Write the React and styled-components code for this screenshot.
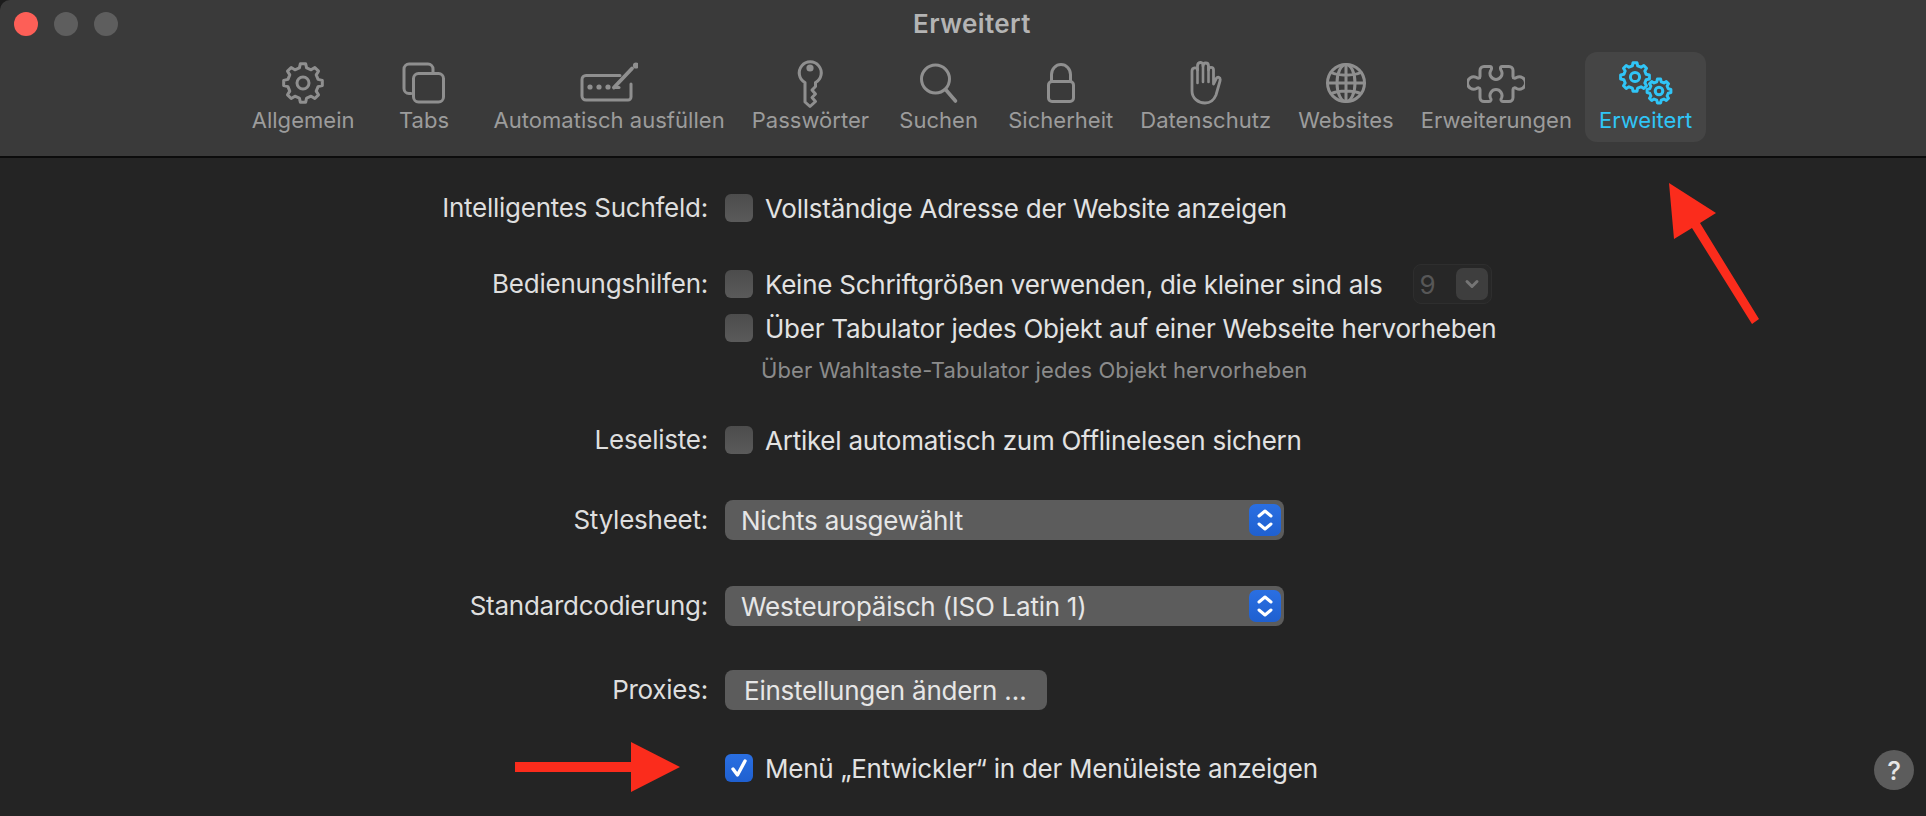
import React from 'react';
import styled, { createGlobalStyle } from 'styled-components';

const GlobalStyle = createGlobalStyle`
  html, body {
    margin: 0;
    height: 100%;
    overflow: hidden;
    background: #1c1c1c;
  }
  body {
    font-family: Inter, "Liberation Sans", sans-serif;
    -webkit-font-smoothing: antialiased;
  }
`;

/* the window is a bit wider than the screenshot, its right edge is cut off */
const Window = styled.div`
  position: relative;
  width: 1944px;
  height: 816px;
  background: #242424;
  border-top-left-radius: 10px;
  overflow: hidden;
`;

const Header = styled.header`
  height: 156px;
  background: #3a3a3a;
  border-bottom: 2px solid #0c0c0c;
`;

const TitleBar = styled.div`
  height: 52px;
  padding: 0 14px;
  display: grid;
  grid-template-columns: 1fr auto 1fr;
  align-items: start;
`;

const Lights = styled.div`
  display: flex;
  gap: 16px;
  padding-top: 12px;
`;

const Light = styled.span`
  width: 24px;
  height: 24px;
  border-radius: 50%;
  background: ${props => props.$color};
`;

const Title = styled.h1`
  margin: 9px 0 0;
  font-size: 26px;
  line-height: 30px;
  font-weight: 600;
  letter-spacing: 0.4px;
  color: #b4b4b4;
`;

const Toolbar = styled.nav`
  display: flex;
  justify-content: center;
`;

const Tool = styled.div`
  min-width: 112px;
  height: 90px;
  box-sizing: border-box;
  padding: 5px 13.5px 0;
  display: flex;
  flex-direction: column;
  align-items: center;
  border-radius: 12px;
  color: ${props => (props.$active ? '#30c5f7' : '#8f8f8f')};
  background: ${props => (props.$active ? '#454545' : 'transparent')};
`;

const ToolLabel = styled.span`
  margin-top: -1px;
  font-size: 22px;
  line-height: 24px;
  letter-spacing: 0.03px;
  white-space: nowrap;
  color: ${props => (props.$active ? '#30c5f7' : '#9c9c9c')};
`;

const Icon = styled.svg`
  display: block;
  height: 52px;
  fill: none;
  stroke: currentColor;
  stroke-width: 3;
  stroke-linecap: round;
  stroke-linejoin: round;
`;

const Form = styled.main`
  padding: 36px 30px 0 0;
`;

const Row = styled.div`
  display: grid;
  grid-template-columns: 708px 1fr;
  column-gap: 17px;
  margin-top: ${props => props.$top || 0}px;
`;

const Label = styled.div`
  text-align: right;
  font-size: 26px;
  line-height: ${props => (props.$tall ? 40 : 28)}px;
  letter-spacing: -0.25px;
  color: #dedede;
  white-space: nowrap;
`;

const Controls = styled.div`
  display: flex;
  flex-direction: column;
  align-items: flex-start;
`;

const CheckRow = styled.label`
  display: flex;
  align-items: center;
  height: 28px;
  gap: 12px;
  margin-top: ${props => props.$top || 0}px;
  font-size: 26px;
  letter-spacing: -0.25px;
  color: #e2e2e2;
  white-space: nowrap;
`;

const Box = styled.span`
  width: 28px;
  height: 28px;
  flex-shrink: 0;
  display: flex;
  align-items: center;
  justify-content: center;
  border-radius: 6px;
  background: ${props =>
    props.$checked
      ? 'linear-gradient(#2a6fe2, #1f60d0)'
      : 'linear-gradient(#4c4c4c, #5a5a5a)'};
`;

const Hint = styled.div`
  margin: 14px 0 0 36px;
  font-size: 22px;
  line-height: 28px;
  letter-spacing: 0.1px;
  color: #8b8b8b;
  white-space: nowrap;
`;

const SizeSelect = styled.span`
  width: 79px;
  height: 40px;
  margin-left: 18px;
  box-sizing: border-box;
  padding: 3px 3px 3px 6px;
  display: flex;
  justify-content: space-between;
  align-items: center;
  background: #272727;
  border: 1px solid #2e2e2e;
  border-radius: 8px;
  font-size: 26px;
  color: #575757;
`;

const SizeArrow = styled.span`
  width: 32px;
  height: 32px;
  display: flex;
  align-items: center;
  justify-content: center;
  border-radius: 7px;
  background: #3e3e3e;
  color: #757575;
`;

const Select = styled.div`
  width: 559px;
  height: 40px;
  box-sizing: border-box;
  padding: 4px 3px 4px 16px;
  display: flex;
  justify-content: space-between;
  align-items: center;
  border-radius: 8px;
  background: #5c5c5c;
  font-size: 26px;
  letter-spacing: -0.25px;
  color: #e6e6e6;
`;

const Stepper = styled.span`
  width: 32px;
  height: 32px;
  display: flex;
  align-items: center;
  justify-content: center;
  border-radius: 7px;
  background: linear-gradient(#2a6fe2, #1f60d0);
  color: #fff;
`;

const Button = styled.div`
  width: 322px;
  height: 40px;
  box-sizing: border-box;
  padding-left: 19px;
  display: flex;
  align-items: center;
  border-radius: 8px;
  background: #5c5c5c;
  font-size: 26px;
  letter-spacing: -0.25px;
  color: #e6e6e6;
`;

const LastControls = styled.div`
  display: flex;
  justify-content: space-between;
  align-items: flex-start;
`;

const Help = styled.span`
  width: 40px;
  height: 40px;
  margin-top: -4px;
  display: flex;
  align-items: center;
  justify-content: center;
  border-radius: 50%;
  background: #5c5c5c;
  font-size: 26px;
  font-weight: 500;
  color: #e6e6e6;
`;

const AnnotationArrow = styled.svg`
  position: absolute;
  left: ${props => props.$left}px;
  top: ${props => props.$top}px;
  fill: #fb2c1c;
`;

// gear outline with the top tooth pointing straight up
const gearPath = (cx, cy, R, r, teeth = 8) => {
  const step = (Math.PI * 2) / teeth;
  const point = (radius, angle) =>
    `${(cx + radius * Math.sin(angle)).toFixed(2)} ${(cy - radius * Math.cos(angle)).toFixed(2)}`;
  let d = '';
  for (let i = 0; i < teeth; i++) {
    const a = i * step;
    d += `${i ? 'L' : 'M'}${point(r, a - step * 0.3)} L${point(R, a - step * 0.17)} L${point(R, a + step * 0.17)} L${point(r, a + step * 0.3)} `;
  }
  return d + 'Z';
};

const GearIcon = () => (
  <Icon width="48" viewBox="0 0 48 52">
    <path d={gearPath(24, 26, 19.5, 15.5)} />
    <circle cx="24" cy="26" r="6" />
  </Icon>
);

const TabsIcon = () => (
  <Icon width="44" viewBox="0 0 44 52">
    <path d="M9 36.5H7a5 5 0 0 1-5-5V12a5 5 0 0 1 5-5h19a5 5 0 0 1 5 5v4" />
    <rect x="11.5" y="16.5" width="30" height="28.5" rx="5" />
  </Icon>
);

const AutofillIcon = () => (
  <Icon width="58" viewBox="0 0 58 52">
    <path d="M40 18.5H6a4 4 0 0 0-4 4V39a4 4 0 0 0 4 4h42a3 3 0 0 0 3-3V27" />
    <path d="M34 30.5L52 11.5" strokeWidth="3.8" />
    <path d="M34 30.5h5" />
    <circle cx="56" cy="8.5" r="1.6" fill="currentColor" />
    <g fill="currentColor" stroke="none">
      <circle cx="10" cy="30" r="2.6" />
      <circle cx="19" cy="30" r="2.6" />
      <circle cx="28" cy="30" r="2.6" />
    </g>
  </Icon>
);

const KeyIcon = () => (
  <Icon width="28" viewBox="0 0 28 52">
    <path d="M9 25.5A11 11 0 1 1 19.5 25.5V29.5L16 33L19.5 37L16 40.5L19.5 44.5L14 49.5L9 45Z" />
    <circle cx="14" cy="11" r="3.6" fill="currentColor" stroke="none" />
  </Icon>
);

const SearchIcon = () => (
  <Icon width="40" viewBox="0 0 40 52">
    <circle cx="16.5" cy="22" r="14" />
    <path d="M27 33L36.5 44" strokeWidth="3.6" />
  </Icon>
);

const LockIcon = () => (
  <Icon width="28" viewBox="0 0 28 52">
    <rect x="1.5" y="24.5" width="25" height="20" rx="3.5" />
    <path d="M4.5 24V17.5a9.5 10 0 0 1 19 0V24" />
  </Icon>
);

const HandIcon = () => (
  <Icon width="32" viewBox="0 0 32 52">
    <path d="M2 17V34C2 41 8 46 15 46C21 46 24 43 26 38L30 24C31 20 27 19 26 22L23.5 27V13C23.5 9.5 18.5 9.5 18.5 13V9C18.5 5 13 5 13 9V8C13 4.5 7.5 4.5 7.5 9V13C7.5 10 2 10 2 14V17Z" strokeWidth="2.8" />
    <path d="M7.5 12V26M13 8V25M18.5 10V25" strokeWidth="2.6" />
  </Icon>
);

const GlobeIcon = () => (
  <Icon width="42" viewBox="0 0 42 52" strokeWidth="2.6">
    <circle cx="21" cy="26" r="18.5" />
    <ellipse cx="21" cy="26" rx="9" ry="18.5" />
    <path d="M21 7.5V44.5M2.5 26H39.5M6 15.5C14 19 28 19 36 15.5M6 36.5C14 33 28 33 36 36.5" />
  </Icon>
);

const PuzzleIcon = () => (
  <Icon width="58" viewBox="0 0 58 52">
    <path d="M17 9.5H23C25 9.5 25 12 23.5 14A6 6 0 1 0 34.5 14C33 12 33 9.5 35 9.5H42A4 4 0 0 1 46 13.5V19.5C46 21.5 48 21.5 49.5 20.5A6.2 6.2 0 1 1 49.5 31.5C48 30.5 46 30.5 46 32.5V40.5A4 4 0 0 1 42 44.5H36C34 44.5 33.5 42.5 34.5 41A6 6 0 1 0 23.5 41C24.5 42.5 24 44.5 22 44.5H17A4 4 0 0 1 13 40.5V32.5C13 30.5 11 30.5 9.5 31.5A6.2 6.2 0 1 1 9.5 20.5C11 21.5 13 21.5 13 19.5V13.5A4 4 0 0 1 17 9.5Z" />
  </Icon>
);

const GearsIcon = () => (
  <Icon width="54" viewBox="0 0 54 52" strokeWidth="2.6">
    <path d={gearPath(16, 20, 14.5, 11.5)} />
    <circle cx="16" cy="20" r="4.6" />
    <path d={gearPath(40, 34, 12, 9.5)} />
    <circle cx="40" cy="34" r="3.8" />
  </Icon>
);

const Chevrons = () => (
  <svg width="20" height="24" viewBox="0 0 20 24" fill="none" stroke="currentColor" strokeWidth="3" strokeLinecap="round" strokeLinejoin="round">
    <path d="M4 8L10 3L16 8M4 16L10 21L16 16" />
  </svg>
);

const tools = [
  { label: 'Allgemein', icon: GearIcon },
  { label: 'Tabs', icon: TabsIcon },
  { label: 'Automatisch ausfüllen', icon: AutofillIcon },
  { label: 'Passwörter', icon: KeyIcon },
  { label: 'Suchen', icon: SearchIcon },
  { label: 'Sicherheit', icon: LockIcon },
  { label: 'Datenschutz', icon: HandIcon },
  { label: 'Websites', icon: GlobeIcon },
  { label: 'Erweiterungen', icon: PuzzleIcon },
  { label: 'Erweitert', icon: GearsIcon, active: true },
];

const Check = ({ checked, top, children }) => (
  <CheckRow $top={top}>
    <Box $checked={checked}>
      {checked && (
        <svg width="18" height="20" viewBox="0 0 18 20" fill="none" stroke="#fff" strokeWidth="3.4" strokeLinecap="round" strokeLinejoin="round">
          <path d="M3 11L7.5 17L15 3" />
        </svg>
      )}
    </Box>
    <span>{children}</span>
  </CheckRow>
);

const App = () => (
  <Window>
    <GlobalStyle />
    <Header>
      <TitleBar>
        <Lights>
          <Light $color="#fd5f57" />
          <Light $color="#5e5e5e" />
          <Light $color="#5e5e5e" />
        </Lights>
        <Title>Erweitert</Title>
      </TitleBar>
      <Toolbar>
        {tools.map(({ label, icon: ToolIcon, active }) => (
          <Tool key={label} $active={active}>
            <ToolIcon />
            <ToolLabel $active={active}>{label}</ToolLabel>
          </Tool>
        ))}
      </Toolbar>
    </Header>

    <Form>
      <Row>
        <Label>Intelligentes Suchfeld:</Label>
        <Controls>
          <Check>Vollständige Adresse der Website anzeigen</Check>
        </Controls>
      </Row>

      <Row $top={48}>
        <Label>Bedienungshilfen:</Label>
        <Controls>
          <CheckRow>
            <Box />
            <span>Keine Schriftgrößen verwenden, die kleiner sind als</span>
            <SizeSelect>
              9
              <SizeArrow>
                <svg width="16" height="10" viewBox="0 0 16 10" fill="none" stroke="currentColor" strokeWidth="3" strokeLinecap="round" strokeLinejoin="round">
                  <path d="M3 2.5L8 7.5L13 2.5" />
                </svg>
              </SizeArrow>
            </SizeSelect>
          </CheckRow>
          <Check top={16}>Über Tabulator jedes Objekt auf einer Webseite hervorheben</Check>
          <Hint>Über Wahltaste-Tabulator jedes Objekt hervorheben</Hint>
        </Controls>
      </Row>

      <Row $top={42}>
        <Label>Leseliste:</Label>
        <Controls>
          <Check>Artikel automatisch zum Offlinelesen sichern</Check>
        </Controls>
      </Row>

      <Row $top={46}>
        <Label $tall>Stylesheet:</Label>
        <Select>
          Nichts ausgewählt
          <Stepper><Chevrons /></Stepper>
        </Select>
      </Row>

      <Row $top={46}>
        <Label $tall>Standardcodierung:</Label>
        <Select>
          Westeuropäisch (ISO Latin 1)
          <Stepper><Chevrons /></Stepper>
        </Select>
      </Row>

      <Row $top={44}>
        <Label $tall>Proxies:</Label>
        <Button>Einstellungen ändern …</Button>
      </Row>

      <Row $top={44}>
        <span />
        <LastControls>
          <Check checked>Menü „Entwickler“ in der Menüleiste anzeigen</Check>
          <Help>?</Help>
        </LastControls>
      </Row>
    </Form>

    <AnnotationArrow $left={1665} $top={180} width="100" height="148" viewBox="0 0 100 148">
      <path d="M4 3L51 33L35 43L94 139L87 144L27 48L9 59Z" />
    </AnnotationArrow>
    <AnnotationArrow $left={512} $top={740} width="172" height="54" viewBox="0 0 172 54">
      <path d="M3 22H119V2L168 27L119 52V32H3Z" />
    </AnnotationArrow>
  </Window>
);

export default App;
